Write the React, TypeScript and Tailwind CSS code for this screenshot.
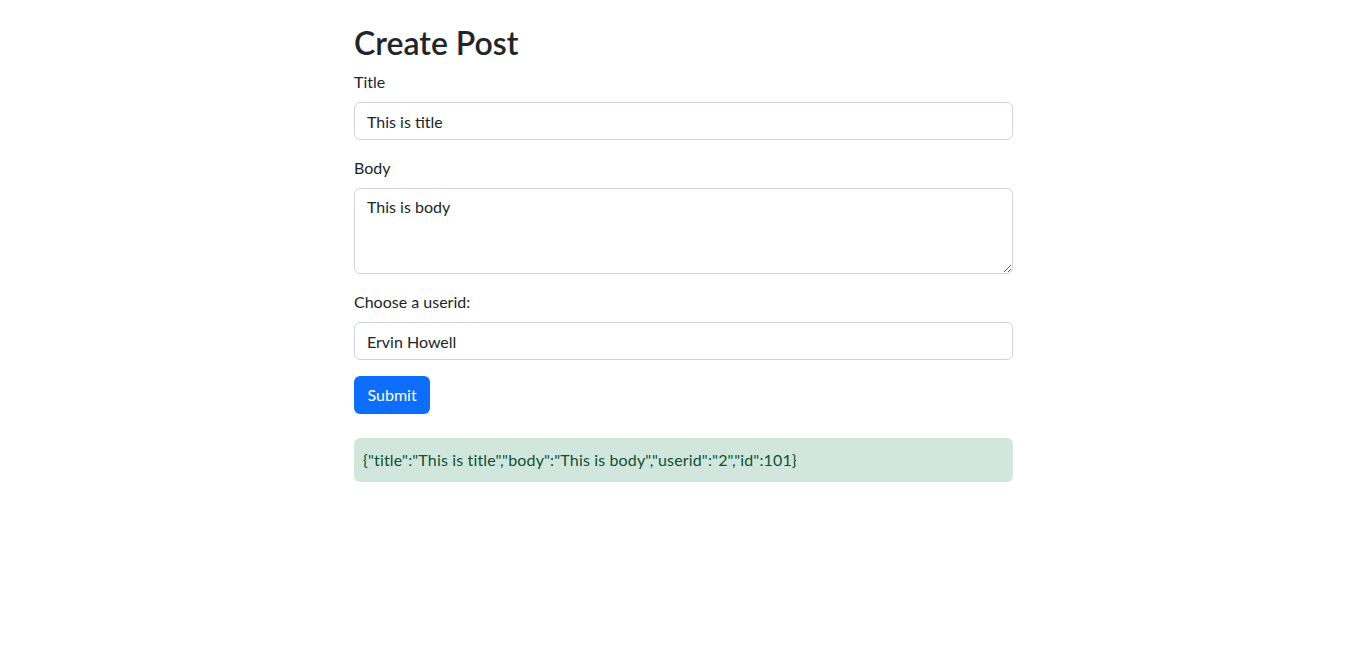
import { useState } from 'react';

export default function App() {
  const [title, setTitle] = useState('This is title');
  const [body, setBody] = useState('This is body');
  const [user, setUser] = useState('Ervin Howell');

  return (
    <div className="min-h-screen bg-white text-[#212529] font-['Lato',sans-serif] text-base leading-6">
      <div className="w-[659px] ml-[354px] pt-6">
        <h1 className="text-[32px] leading-[38px] font-semibold mb-2">Create Post</h1>
        <form onSubmit={(e) => e.preventDefault()}>
          <div className="mb-4">
            <label className="block mb-2">Title</label>
            <input
              value={title}
              onChange={(e) => setTitle(e.target.value)}
              className="block w-full h-[38px] px-3 py-1.5 border border-[#ced4da] rounded-md outline-none text-[#212529]"
            />
          </div>
          <div className="mb-4">
            <label className="block mb-2">Body</label>
            <textarea
              rows={3}
              value={body}
              onChange={(e) => setBody(e.target.value)}
              className="block w-full h-[86px] px-3 py-1.5 border border-[#ced4da] rounded-md outline-none resize-y text-[#212529]"
            />
          </div>
          <div className="mb-4">
            <label className="block mb-2">Choose a userid:</label>
            <input
              value={user}
              onChange={(e) => setUser(e.target.value)}
              className="block w-full h-[38px] px-3 py-1.5 border border-[#ced4da] rounded-md outline-none text-[#212529]"
            />
          </div>
          <button type="submit" className="h-[38px] px-[13.5px] bg-[#0d6efd] text-white rounded-md">
            Submit
          </button>
        </form>
        <div className="mt-6 px-[9px] py-[10px] bg-[#d1e7dd] text-[#0f5132] rounded-md tracking-[0.15px]">
          {'{"title":"This is title","body":"This is body","userid":"2","id":101}'}
        </div>
      </div>
    </div>
  );
}
